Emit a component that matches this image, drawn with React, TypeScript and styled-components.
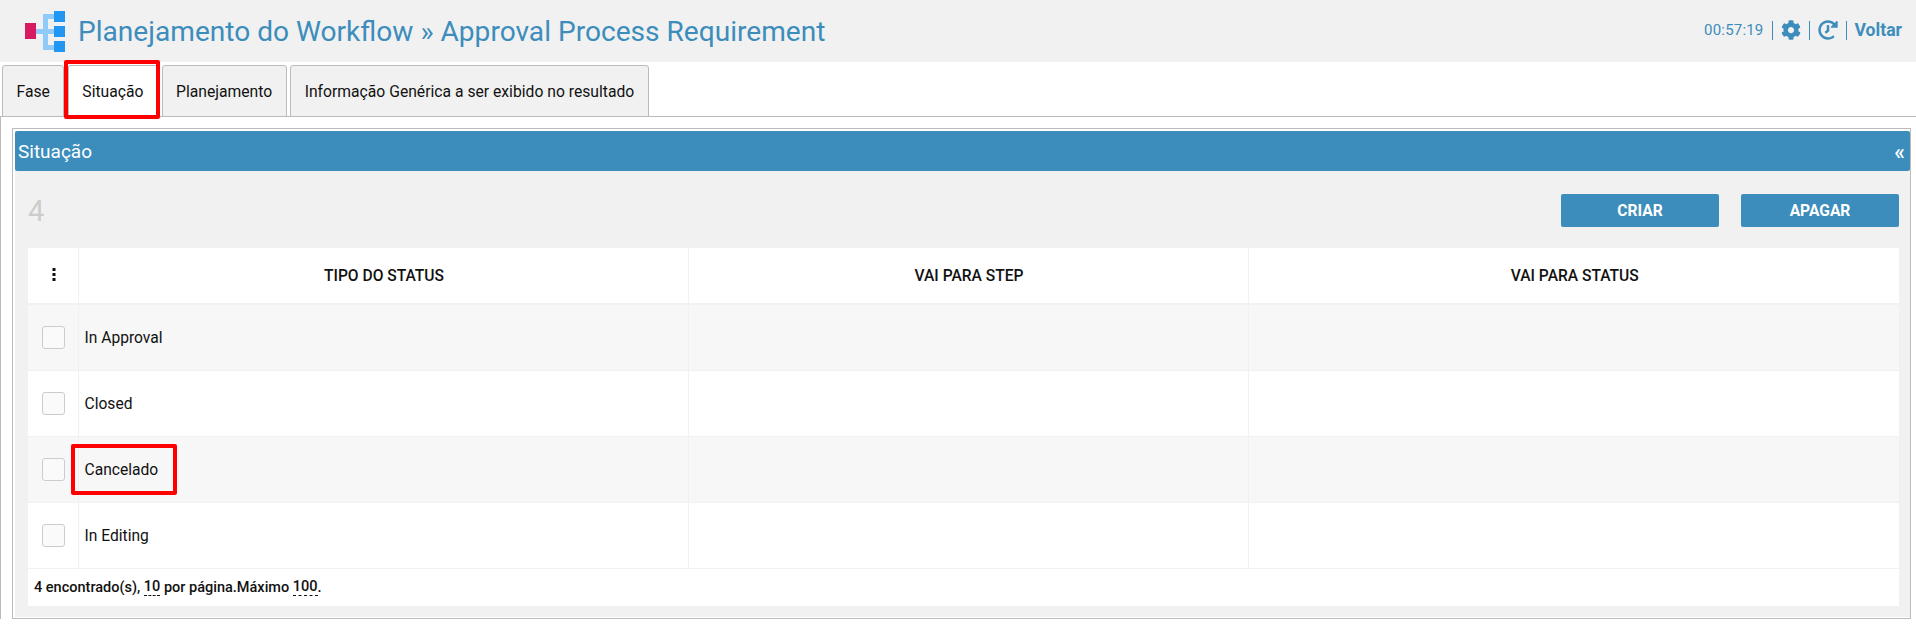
import React from 'react';
import styled, { createGlobalStyle } from 'styled-components';
import { FaCog, FaHistory } from 'react-icons/fa';

const BLUE = '#3c8dbc';

const GlobalStyle = createGlobalStyle`
  html, body {
    margin: 0;
    padding: 0;
    background: #fff;
    font-family: Roboto, "Liberation Sans", sans-serif;
    color: #111;
  }
  * {
    box-sizing: border-box;
  }
`;

const Page = styled.div`
  width: 1916px;
  height: 624px;
  overflow: hidden;
`;

const Header = styled.header`
  height: 62px;
  background: #f1f1f1;
  display: flex;
  align-items: center;
  justify-content: space-between;
  padding: 0 14px 0 25px;
`;

const TitleArea = styled.div`
  display: flex;
  align-items: center;
  gap: 13px;
`;

const Title = styled.h1`
  margin: 0;
  font-size: 28.1px;
  font-weight: 400;
  color: ${BLUE};
`;

const HeaderTools = styled.div`
  display: flex;
  align-items: center;
  gap: 8px;
  color: ${BLUE};
  font-size: 15px;
  margin-top: -2px;
`;

const Clock = styled.span`
  letter-spacing: 0.2px;
`;

const Sep = styled.span`
  width: 1px;
  height: 19px;
  background: ${BLUE};
`;

const Flip = styled.span`
  display: flex;
  transform: scaleX(-1);
`;

const BackLink = styled.span`
  font-size: 17.6px;
  font-weight: 700;
`;

const TabBar = styled.nav`
  height: 55px;
  display: flex;
  align-items: flex-end;
  gap: 3.5px;
  padding-left: 2px;
  border-bottom: 1px solid #bbb;
`;

const Tab = styled.div<{ $active?: boolean }>`
  position: relative;
  height: 52px;
  margin-bottom: -1px;
  padding: 0 13.5px;
  display: flex;
  align-items: center;
  font-size: 15.7px;
  background: ${(p) => (p.$active ? '#fff' : '#f1f1f1')};
  border: 1px solid #bbb;
  border-bottom: ${(p) => (p.$active ? 'none' : '1px solid #bbb')};
  border-radius: 3px 3px 0 0;
`;

const Mark = styled.div`
  position: absolute;
  border: 4px solid #f00;
  border-radius: 2px;
  pointer-events: none;
`;

const TabMark = styled(Mark)`
  left: -5px;
  right: -3px;
  top: -6px;
  bottom: -2px;
`;

const CellMark = styled(Mark)`
  left: -14px;
  top: -17px;
  width: 106px;
  height: 51px;
`;

const Content = styled.main`
  padding: 11px 5px 0 11px;
  border-left: 1px solid #bbb;
`;

const Box = styled.section`
  height: 491px;
  border: 1px solid #bbb;
  padding: 2px 0 0 2px;
  background: #fff;
`;

const PanelHead = styled.div`
  height: 40px;
  background: ${BLUE};
  border-radius: 2px;
  color: #fff;
  display: flex;
  align-items: center;
  justify-content: space-between;
  padding: 0 5px 0 3px;
  font-size: 19px;
`;

const Chevrons = styled.span`
  font-size: 22px;
  font-weight: 500;
`;

const PanelBody = styled.div`
  background: #f1f1f1;
  height: 446px;
  padding: 23px 11px 0 13px;
`;

const Toolbar = styled.div`
  height: 54px;
  display: flex;
  align-items: flex-start;
  gap: 22px;
`;

const Count = styled.span`
  flex: 1;
  font-size: 29px;
  line-height: 35px;
  color: #ccc;
`;

const ActionButton = styled.button`
  width: 158px;
  height: 33px;
  border: none;
  border-radius: 2px;
  background: ${BLUE};
  color: #fff;
  font-family: inherit;
  font-size: 15.6px;
  font-weight: 700;
`;

const Table = styled.table`
  width: 100%;
  table-layout: fixed;
  border-collapse: collapse;
  background: #fff;
  font-size: 15.6px;
`;

const HeadCell = styled.th`
  height: 56px;
  padding: 0 0 0 2px;
  font-size: 15.6px;
  font-weight: 500;
  text-align: center;
  border-left: 1px solid #f1f1f1;
  border-bottom: 2px solid #f1f1f1;
  &:first-child {
    border-left: none;
  }
`;

const Row = styled.tr<{ $odd: boolean }>`
  background: ${(p) => (p.$odd ? '#f7f7f7' : '#fff')};
`;

const Cell = styled.td`
  height: 66px;
  padding: 2px 0 0 6px;
  font-weight: 400;
  border-left: 1px solid #f1f1f1;
  border-bottom: 1px solid #f1f1f1;
`;

const CheckCell = styled.td`
  padding: 0 0 0 2px;
  text-align: center;
  border-bottom: 1px solid #f1f1f1;
`;

const CellInner = styled.div`
  position: relative;
`;

const CheckBox = styled.span`
  display: inline-block;
  width: 23px;
  height: 23px;
  margin-top: 4px;
  border: 1px solid #ccc;
  border-radius: 3px;
  background: #fafafa;
`;

const Dots = styled.svg`
  display: block;
  margin: -2px auto 0;
`;

const Footer = styled.div`
  height: 37px;
  background: #fff;
  padding-left: 6px;
  display: flex;
  align-items: center;
  font-size: 14.5px;
  font-weight: 500;
  white-space: pre;
`;

const Editable = styled.span`
  border-bottom: 1px dashed #111;
`;

const Logo = () => (
  <svg width="40" height="41" viewBox="0 0 40 41">
    <g fill="#90caf9">
      <rect x="11" y="18" width="18" height="5" />
      <rect x="18" y="3" width="5" height="36" />
      <rect x="18" y="3" width="11" height="5" />
      <rect x="18" y="34" width="11" height="5" />
    </g>
    <rect x="0" y="12" width="11" height="16" fill="#d81b60" />
    <g fill="#2196f3">
      <rect x="29" y="0" width="11" height="11" />
      <rect x="29" y="15" width="11" height="11" />
      <rect x="29" y="30" width="11" height="11" />
    </g>
  </svg>
);

const rows = ['In Approval', 'Closed', 'Cancelado', 'In Editing'];

const App: React.FC = () => (
  <Page>
    <GlobalStyle />
    <Header>
      <TitleArea>
        <Logo />
        <Title>Planejamento do Workflow » Approval Process Requirement</Title>
      </TitleArea>
      <HeaderTools>
        <Clock>00:57:19</Clock>
        <Sep />
        <FaCog size={20} />
        <Sep />
        <Flip>
          <FaHistory size={20} />
        </Flip>
        <Sep />
        <BackLink>Voltar</BackLink>
      </HeaderTools>
    </Header>
    <TabBar>
      <Tab>Fase</Tab>
      <Tab $active>
        Situação
        <TabMark />
      </Tab>
      <Tab>Planejamento</Tab>
      <Tab>Informação Genérica a ser exibido no resultado</Tab>
    </TabBar>
    <Content>
      <Box>
        <PanelHead>
          Situação
          <Chevrons>«</Chevrons>
        </PanelHead>
        <PanelBody>
          <Toolbar>
            <Count>4</Count>
            <ActionButton>CRIAR</ActionButton>
            <ActionButton>APAGAR</ActionButton>
          </Toolbar>
          <Table>
            <colgroup>
              <col width="50" />
              <col width="610" />
              <col width="560" />
              <col />
            </colgroup>
            <thead>
              <tr>
                <HeadCell>
                  <Dots width="4" height="14" viewBox="0 0 4 14">
                    <rect x="0.5" y="0" width="3" height="3" fill="#111" />
                    <rect x="0.5" y="5" width="3" height="3" fill="#111" />
                    <rect x="0.5" y="10" width="3" height="3" fill="#111" />
                  </Dots>
                </HeadCell>
                <HeadCell>TIPO DO STATUS</HeadCell>
                <HeadCell>VAI PARA STEP</HeadCell>
                <HeadCell>VAI PARA STATUS</HeadCell>
              </tr>
            </thead>
            <tbody>
              {rows.map((name, i) => (
                <Row key={name} $odd={i % 2 === 0}>
                  <CheckCell>
                    <CheckBox />
                  </CheckCell>
                  <Cell>
                    <CellInner>
                      {name}
                      {name === 'Cancelado' && <CellMark />}
                    </CellInner>
                  </Cell>
                  <Cell />
                  <Cell />
                </Row>
              ))}
            </tbody>
          </Table>
          <Footer>
            4 encontrado(s), <Editable>10</Editable> por página.Máximo <Editable>100</Editable>.
          </Footer>
        </PanelBody>
      </Box>
    </Content>
  </Page>
);

export default App;
